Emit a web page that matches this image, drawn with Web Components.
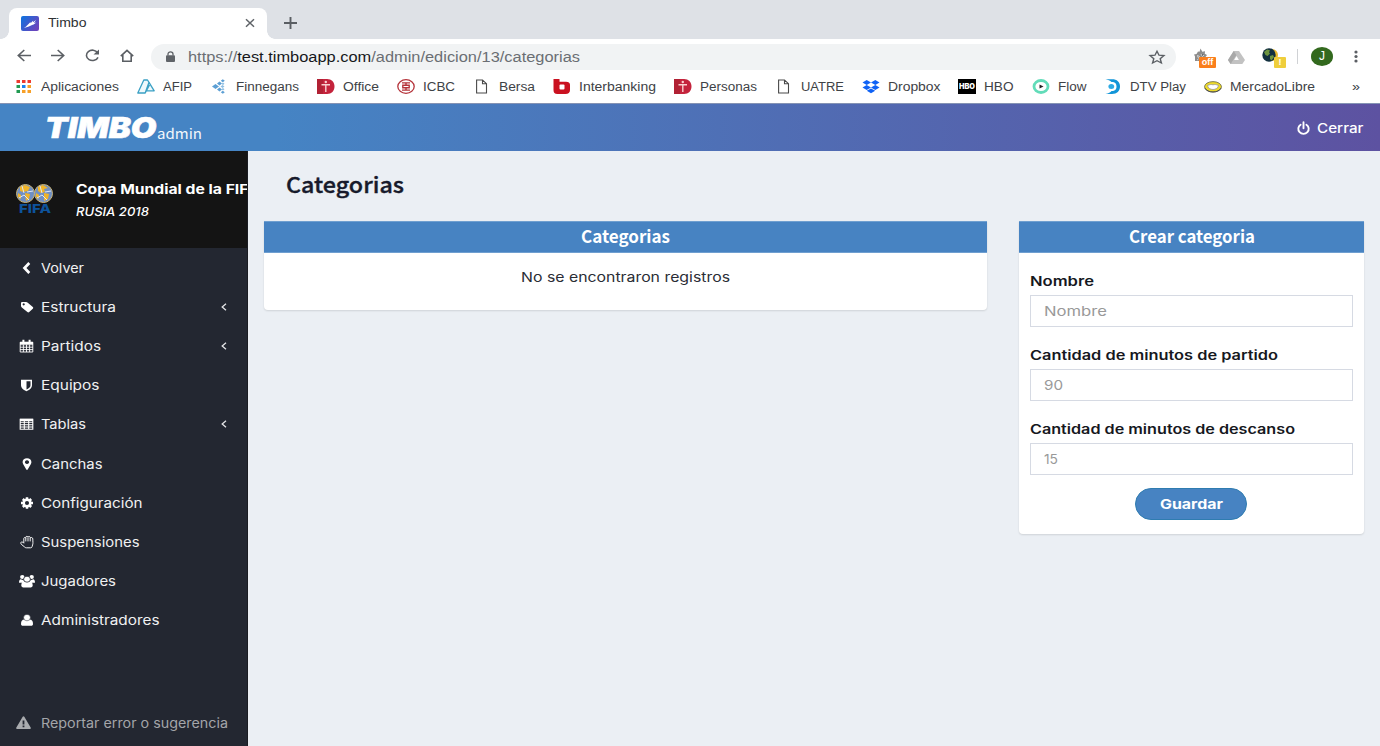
<!DOCTYPE html>
<html lang="es">
<head>
<meta charset="utf-8">
<title>Timbo</title>
<style>
html,body{margin:0;padding:0;height:100%;overflow:hidden;background:#ebeff4}
</style>
</head>
<body>
<timbo-window></timbo-window>

<script>
const define = (name, html, after) => {
  const tpl = document.createElement('template');
  tpl.innerHTML = html;
  customElements.define(name, class extends HTMLElement {
    connectedCallback() {
      if (this.shadowRoot) return;
      this.attachShadow({mode: 'open'}).append(tpl.content.cloneNode(true));
      if (after) after(this, this.shadowRoot);
    }
  });
};

/* One line of text, set to an exact width by widening its letters. */
define('fit-text', `
<style>
:host{display:inline-block;white-space:nowrap;flex:none}
span{display:inline-block;transform-origin:0 50%;white-space:pre}
</style><span><slot></slot></span>`, (el, root) => {
  const w = parseFloat(el.getAttribute('w'));
  const s = root.querySelector('span');
  const n = s.getBoundingClientRect().width;
  el.style.width = w + 'px';
  if (n) s.style.transform = 'scaleX(' + (w / n) + ')';
});

const ICONS = {
  /* browser */
  favicon: '<defs><linearGradient id="g" x1="0" x2="1" y2=".6"><stop stop-color="#0b74e0"/><stop offset="1" stop-color="#6a45bd"/></linearGradient></defs><rect width="18" height="15" rx="2" fill="url(#g)"/><path d="M2.800 11.800c1.700-.4 2.500-1.600 4-3l2.700-2.900.1 1.300 2.600-2.700-.3 1.800L15 3.900l-2 3 2.300-.5c-1.700 1.700-3.600 2.300-5.800 3.300-2.200.9-4.200 1.900-6.700 2.100z" fill="#fff"/>|18 15',
  close: '<path d="M1 1.200l8 7.600M9 1.200L1 8.800" stroke="#5f6368" stroke-width="1.500"/>|10 10',
  plus: '<path d="M6.500 0v12M0 6h13" stroke="#5a5e63" stroke-width="1.900"/>|13 12',
  back: '<path d="M14 6.500H1.500M7.300 1L1.300 6.500l6 5.500" fill="none" stroke="#5b5f64" stroke-width="1.600"/>|14 13',
  fwd: '<path d="M0 6.500h12.500M6.700 1l6 5.500-6 5.500" fill="none" stroke="#5b5f64" stroke-width="1.600"/>|14 13',
  reload: '<path d="M12.600 3.700A6 5.200 0 1 0 13 8.300" fill="none" stroke="#5b5f64" stroke-width="1.600"/><path d="M14 .5v5H8.500z" fill="#5b5f64"/>|15 13',
  home: '<path d="M.8 7.200L7 1.300l6.200 5.900M2.800 6v6.200h8.400V6" fill="none" stroke="#5b5f64" stroke-width="1.600"/>|14 13',
  lock: '<rect y="4.200" width="9" height="6.800" rx="1" fill="#5f6368"/><path d="M2 4.500V3a2.500 2.200 0 0 1 5 0v1.500" fill="none" stroke="#5f6368" stroke-width="1.300"/>|9 11',
  star: '<path d="M8 1.200l2 4 4.900.4-3.700 3.100 1.200 4.300L8 10.700 3.600 13l1.200-4.300L1.100 5.600 6 5.200z" fill="none" stroke="#5b5f64" stroke-width="1.400"/>|16 14',
  dots: '<circle cx="2" cy="2" r="1.600"/><circle cx="2" cy="6.500" r="1.600"/><circle cx="2" cy="11" r="1.600"/>|4 13',
  wolf: '<path d="M1 13V8.500L0 6.500l2.500-.5L4 3.500l1.500.3L6.500.5 8.300 3.700l2.700-.5-.2 2.500L13 7l-1.500 2 .5 4z" fill="#8d8d8d"/><path d="M3.500 7.500l2 1-1.500 1zM7 6l1.500 2.500L10 7M3 12l2.500-1.500L8 12" stroke="#ececec" fill="#444" stroke-width=".8"/>|14 14',
  drive: '<path d="M5.700 0h5.300l6 9-2.700 4H2.600L0 9z" fill="#c2c2c2"/><path d="M5.700 0L0 9l2.600 4L8.400 4z" fill="#a9a9a9"/><path d="M8.500 5l2.400 4H6.100z" fill="#fff"/>|17 13',
  globe: '<circle cx="10" cy="7" r="6" fill="#e9b92e"/><circle cx="7" cy="7" r="6.700" fill="#12303f"/><path d="M2 4l3-2.500 3 .8-1 2 1 1.200-2.500 2.500-2-1zM8 8l3-1 1 2-2.500 3.500L8 11z" fill="#6d9440"/>|17 14',
  /* bookmarks */
  apps: '<g><path fill="#ee3b2f" d="M1.500 1h3.500v3H1.500zM7 1h3.500v3H7zM12.500 1H16v3h-3.500z"/><path fill="#219a52" d="M1.500 6h3.500v3H1.500zM1.500 11h3.500v3H1.500z"/><path fill="#1a82f0" d="M7 6h3.500v3H7z"/><path fill="#f7a028" d="M12.500 6H16v3h-3.500zM7 11h3.500v3H7zM12.500 11H16v3h-3.500z"/></g>|18 15',
  afip: '<path d="M6.800 1h3.700L12 3.300 8.200 14H.8zM12 3.300l5.200 8.500H9M8.200 14L12.500 6" fill="#eef9fc" stroke="#3aa0c4" stroke-width="1.300" stroke-linejoin="round"/>|18 15',
  finn: '<g fill="#5c9fd4"><path d="M2 7.500l3.500-2.600L9 7.500l-3.500 2.600z"/><path d="M7 4.600l2.500-2 2.500 2-2.500 2zM7 10.400l2.500-2 2.500 2-2.500 2zM10.800 1.700l2-1.500 2 1.500-2 1.500zM10.800 13.300l2-1.500 2 1.500-2 1.500z"/></g><g fill="#8fbfe3"><path d="M10.500 7.500l2-1.600 2 1.600-2 1.600zM11.500 4.700l1.500-1.200 1.500 1.200L13 5.900zM11.500 10.300l1.500-1.200 1.500 1.200-1.500 1.200z"/></g>|18 15',
  telecom: '<path d="M0 0h10c4.500 0 7.500 3 7.500 7.500S14.500 15 10 15H0z" fill="#c4233c"/><path d="M0 0h6v15H0z" fill="#a5202f" opacity=".6"/><path d="M4.500 5.700h8.500M8.800 5v8" stroke="#f9cfcf" stroke-width="1.400"/><circle cx="8.800" cy="3" r="1.200" fill="#f9cfcf"/>|18 15',
  icbc: '<ellipse cx="9" cy="7.500" rx="8.200" ry="6.800" fill="#fff" stroke="#b5343b" stroke-width="1.300"/><path d="M5 3.900h8M5 11.100h8M5.800 6.200h6.400v2.600H5.800zM9 3.900v2.300M9 8.800v2.300" fill="none" stroke="#b5343b" stroke-width="1.400"/>|18 15',
  page: '<path d="M3.600 1h5.900l4 3.700V14H3.600zM9.500 1v3.700h4" fill="#fff" stroke="#4a4a4a" stroke-width="1.100"/>|18 15',
  inter: '<path d="M.5 0h6v2.700H13c2.500 0 4 1 4 3V11c0 2.600-1.600 4-4.500 4h-8C1.600 15 .5 13.500.5 11z" fill="#ca1120"/><rect x="6.500" y="5.500" width="5" height="5" rx="1" fill="#fff"/>|18 15',
  dropbox: '<path d="M4.700 1L9 3.500 4.700 6 .5 3.500zM13.300 1l4.200 2.500L13.300 6 9 3.500zM4.700 6L9 8.500 4.700 11 .5 8.500zM13.300 6l4.200 2.500-4.200 2.500L9 8.500zM9 9.400l4.200 2.400L9 14.200l-4.200-2.400z" fill="#0f62f5"/>|18 15',
  flow: '<ellipse cx="9" cy="7.500" rx="7" ry="6" fill="#fff" stroke="#62dcb9" stroke-width="2.800"/><path d="M7.500 5.400l4 2.100-4 2.100z" fill="#222"/>|18 15',
  dtv: '<path d="M1.500.3h6.500C13 .3 16 3 16 7.500S13 15 8 15H1.500c3-.6 5-1.400 6-3 4 0 5-2 5-4.500s-1-4.500-5-4.500C6 1.500 4 .8 1.500.3z" fill="#1295d8"/><ellipse cx="7.300" cy="7.500" rx="2.900" ry="2.500" fill="#2eaae4"/>|18 15',
  meli: '<ellipse cx="9" cy="7.800" rx="8.500" ry="5.200" fill="#ecd92c" stroke="#55543f" stroke-width=".7"/><path d="M3.500 6.500C6 5.500 7 5.300 9 5.800c2-.5 3-.3 5.500.7-.3 2.500-3 4-5.500 4s-5.200-1.500-5.500-4z" fill="#fff" stroke="#8b8b8b" stroke-width=".7"/><path d="M1 9.200c1.500 2.500 4.500 3.800 8 3.800s6.500-1.300 8-3.800" fill="none" stroke="#4a4b52" stroke-width="1"/>|18 15',
  /* application */
  power: '<path d="M3.600 2.700a5.200 5 0 1 0 5.800 0M6.500.3v5.900" fill="none" stroke="#fff" stroke-width="1.900" stroke-linecap="round"/>|13 13',
  left: '<path d="M8.800 2L4 7l4.800 5" fill="none" stroke="#fff" stroke-width="2.700" transform="translate(.5 0)"/>|14 14',
  tag: '<path fill-rule="evenodd" d="M1 3.200C1 2.500 1.600 2 2.300 2H6c.6 0 1.300.3 1.800.7l5 4.400c.6.5.6 1.200 0 1.700l-3.600 3.300c-.5.5-1.300.5-1.800 0L1.800 7.600C1.300 7.100 1 6.600 1 6zM3.700 3.300a1.100 1 0 1 0 .01 0z"/>|14 14',
  cal: '<path d="M1.200 3.200h12.600V13H1.200zM1 5.700h13M1 8.200h13M1 10.600h13M4.400 5.500V13M7.500 5.500V13M10.600 5.500V13" fill="none" stroke="#fff" stroke-width=".9"/><path d="M1 3h13v2H1zM3.400.8h2v3h-2zM9.600.8h2v3h-2z"/>|15 14',
  shield: '<path fill-rule="evenodd" d="M2 1.800h11v5.500c0 3-3 5-5.500 6C5 12.300 2 10.300 2 7.300zM7.500 3.200v8.400c2-1 4-2.300 4-4.400v-4z"/>|15 14',
  table: '<path d="M1.200 2.200h12.600v10H1.200zM1 5.300h13M1 7.700h13M1 10h13M5.300 4v8M9.700 4v8" fill="none" stroke="#fff" stroke-width="1.100"/><path d="M1 1.800h13v2.200H1z"/>|15 14',
  pin: '<path fill-rule="evenodd" d="M7 1.200c2.600 0 4.400 1.600 4.400 3.900 0 .8-.2 1.300-.5 1.800L7.700 12.600c-.3.500-1.100.5-1.400 0L3.100 6.900c-.3-.5-.5-1-.5-1.800 0-2.300 1.800-3.900 4.400-3.900zM7 3.200a2.100 1.900 0 1 0 .01 0z"/>|14 14',
  gear: '<path d="M7 1.200v11.600M1 7h12M2.800 3l8.400 8M11.200 3l-8.400 8" stroke="#fff" stroke-width="2.500"/><ellipse cx="7" cy="7" rx="3.300" ry="3.200" fill="#232731" stroke="#fff" stroke-width="2.500"/>|14 14',
  hand: '<path d="M3.800 8.200V3.500c0-1.300 2-1.300 2-.1V2.300c0-1.300 2.200-1.300 2.200 0 0-1.200 2.200-1.200 2.200.2v.8c0-1.200 2.600-1.200 2.600.6 0 3 .4 4.300-.2 6l-.5 1.700c-.2.800-.6 1.200-1.500 1.200H6.500c-1 0-1.500-.3-2-.9L1.300 9.300C0 7.600 1.500 6.200 2.800 7.200l1 1M5.800 3.400v3M8 2.700v3.700M10.200 3.300v3.100" fill="none" stroke="#fff" stroke-width=".95" stroke-linejoin="round"/>|14 14',
  users: '<ellipse cx="3.300" cy="3" rx="2.200" ry="2"/><ellipse cx="12.700" cy="3" rx="2.200" ry="2"/><path d="M0 8.700c0-2 .7-3.300 1.700-3.400L5 6.500v2.200zM16 8.700c0-2-.7-3.300-1.700-3.400L11 6.500v2.200z"/><path d="M2.300 11.500c0-2.500 1-4.200 2.800-4.200h5.800c1.800 0 2.800 1.700 2.800 4.200 0 1.100-.8 1.900-2 1.900H4.300c-1.200 0-2-.8-2-1.900z"/><ellipse cx="8" cy="5.200" rx="3.400" ry="3" stroke="#232731" stroke-width=".8"/>|16 14',
  user: '<path d="M1 11c0-2.700 1.100-4.400 3.300-4.400h5.400c2.200 0 3.300 1.700 3.300 4.400 0 1.100-.8 1.800-1.800 1.800H2.800C1.800 12.800 1 12.100 1 11z"/><ellipse cx="7" cy="4.600" rx="3.400" ry="3.200" stroke="#232731" stroke-width=".5"/>|14 14',
  angle: '<path d="M5 .8L1.200 4 5 7.200" fill="none" stroke="#e4e5e7" stroke-width="1.300"/>|6 8',
  warn: '<path fill-rule="evenodd" d="M6.700.8c.4-.7 1.200-.7 1.600 0l6.500 11c.3.600-.1 1.200-.8 1.200H1c-.7 0-1.100-.6-.8-1.200zM6.600 4.400v4h1.800v-4zM6.600 9.500v1.800h1.800V9.500z" fill="#a9abae"/>|15 13',
  fifa: '<circle cx="9.500" cy="9.500" r="9" fill="#6f8fc4" stroke="#c9b478"/><circle cx="27.500" cy="9.500" r="9" fill="#6f8fc4" stroke="#c9b478"/><g fill="#f0b429"><path d="M4 3l5-2 5 2-2 4-5 1-3-1zM9 9l5 1-1 5-3 2zM2 9l3 2v4l-3-2zM22 3l5-2 5 3-4 1 1 3-4 1-3-2zM28 9l5 1-1 5-4 2z"/><path d="M20 9l3 2v4l-3-2z"/></g><path d="M3 14l5-3 5 5M6 2l2 7M21 14l5-3 5 5M24 2l2 7M11 8l6-1M29 8l6-1" stroke="#dfe8f4" fill="none"/>|37 19'
};

define('ui-icon', `<style>:host{display:inline-flex;flex:none}svg{display:block;overflow:visible}</style>`, (el, root) => {
  const [body, size] = ICONS[el.getAttribute('name')].split('|');
  const [w, h] = size.split(' ');
  root.innerHTML += `<svg width="${w}" height="${h}" viewBox="0 0 ${w} ${h}" fill="${el.getAttribute('fill') || '#fff'}">${body}</svg>`;
});

define('tab-strip', `
<style>
:host{display:flex;height:39px;background:#dee1e6;box-sizing:border-box;padding:8px 0 0 9px;align-items:flex-start;font:12px/14px "Liberation Sans",Arial,sans-serif;color:#2e3134}
.tab{position:relative;display:flex;align-items:center;width:258px;height:31px;box-sizing:border-box;padding:0 12px 1px;background:#fff;border-radius:8px 8px 0 0}
.tab::before,.tab::after{content:"";position:absolute;bottom:0;width:8px;height:8px}
.tab::before{left:-8px;background:radial-gradient(circle at 0 0,transparent 7.500px,#fff 8px)}
.tab::after{right:-8px;background:radial-gradient(circle at 100% 0,transparent 7.500px,#fff 8px)}
fit-text{margin-left:8.500px}
ui-icon + fit-text + ui-icon{margin-left:auto}
.new{margin:9px 0 0 17px}
</style>
<div class="tab"><ui-icon name="favicon"></ui-icon><fit-text w="38.500">Timbo</fit-text><ui-icon name="close"></ui-icon></div>
<ui-icon class="new" name="plus"></ui-icon>`);

define('badge-icon', `
<style>
:host{display:block;position:relative;flex:none}
b{position:absolute;left:var(--x);top:var(--y);width:var(--w);height:11px;background:var(--c);border-radius:1px;color:#fff;font:bold 9px/11px "Liberation Sans",Arial,sans-serif;text-align:center}
</style><slot></slot><b><slot name="badge"></slot></b>`);

define('tool-bar', `
<style>
:host{display:flex;align-items:center;height:34px;background:#fff;box-sizing:border-box;padding:0 22px 0 17px;font:14px/20px "Liberation Sans",Arial,sans-serif}
.nav{display:flex;align-items:center;gap:20px;margin-right:17px;padding-bottom:1px}
.omni{display:flex;align-items:center;box-sizing:border-box;width:1025px;height:26px;border-radius:13px;background:#f1f3f4;padding:0 11px 0 15px;color:#6a6e73;margin-top:1px}
.omni fit-text{margin-left:12.500px}
.omni b{font-weight:400;color:#16181b}
.omni ui-icon:last-child{margin-left:auto}
.ext{display:flex;align-items:center;margin-left:18px;flex:1}
.sep{width:1px;height:15px;background:#d0d2d5;margin-left:18px}
.av{display:flex;justify-content:center;width:22px;height:19px;border-radius:50%;background:#33691e;color:#fff;font-size:12px;line-height:19px;margin-left:13px}
</style>
<div class="nav"><ui-icon name="back"></ui-icon><ui-icon name="fwd"></ui-icon><ui-icon name="reload"></ui-icon><ui-icon name="home"></ui-icon></div>
<div class="omni"><ui-icon name="lock"></ui-icon><fit-text w="392">https://<b>test.timboapp.com</b>/admin/edicion/13/categorias</fit-text><ui-icon name="star"></ui-icon></div>
<div class="ext">
<badge-icon style="--x:5px;--y:10px;--w:17px;--c:#fa7f1c;margin-top:2px"><ui-icon name="wolf"></ui-icon><span slot="badge">off</span></badge-icon>
<ui-icon name="drive" style="margin-left:20px;margin-top:2px"></ui-icon>
<badge-icon style="margin-left:17px;--x:12px;--y:10px;--w:12px;--c:#efce3c;margin-top:1px"><ui-icon name="globe"></ui-icon><span slot="badge">!</span></badge-icon>
<span class="sep"></span><span class="av">J</span><ui-icon name="dots" fill="#5b5f64" style="margin-left:auto"></ui-icon></div>`);

const BOOKMARKS = [['apps','Aplicaciones',78],['afip','AFIP',29],['finn','Finnegans',63],['telecom','Office',36],['icbc','ICBC',32],['page','Bersa',36],['inter','Interbanking',77],['telecom','Personas',57],['page','UATRE',43],['dropbox','Dropbox',52.500],['hbo','HBO',29.500],['flow','Flow',28.500],['dtv','DTV Play',56],['meli','MercadoLibre',85]];

define('hbo-mark', `
<style>:host{display:flex;width:18px;height:15px;background:#000;align-items:center;justify-content:center;color:#fff;font:900 7px/15px Inter,sans-serif}</style><fit-text w="16">HBO</fit-text>`);

define('bookmark-bar', `
<style>
:host{display:flex;align-items:center;height:31px;background:#fff;border-bottom:1px solid #8593b4;box-sizing:border-box;padding:0 20px 3px 14.500px;gap:18px;font:12px/16px "Liberation Sans",Arial,sans-serif;color:#3e4246}
.i{display:flex;align-items:center;gap:8px;flex:none}
.more{margin-left:auto}
</style>`, (el, root) => {
  root.innerHTML += BOOKMARKS.map(([i, t, w]) =>
    `<div class="i">${i === 'hbo' ? '<hbo-mark></hbo-mark>' : `<ui-icon name="${i}"></ui-icon>`}<fit-text w="${w}">${t}</fit-text></div>`).join('')
    + '<fit-text class="more" w="8">»</fit-text>';
});

define('app-header', `
<style>
:host{display:flex;align-items:center;height:47px;box-sizing:border-box;padding:0 17px 0 44.500px;background:linear-gradient(90deg,#4584c4 0%,#4584c4 20%,#5d52a1 100%);color:#fff}
.logo{font:italic 900 28px/30px Inter,sans-serif;-webkit-text-stroke:.6px #fff;margin-top:1px}
.admin{font:14px/20px "Noto Sans CJK SC","Noto Sans",sans-serif;margin:11px 0 0 1px;color:#f3f7fb}
.out{display:flex;align-items:center;gap:7px;margin:1px 0 0 auto;font:500 13px/20px Inter,sans-serif}
</style>
<fit-text class="logo" w="111.500">TIMBO</fit-text><fit-text class="admin" w="45">admin</fit-text>
<div class="out"><ui-icon name="power"></ui-icon><fit-text w="46.500">Cerrar</fit-text></div>`);

define('side-item', `
<style>
:host{display:flex;align-items:center;height:39.200px;box-sizing:border-box;padding:0 20px 0 16.500px;font:400 13px/18px Inter,sans-serif;color:#f0f1f2}
.ic{width:20px;margin-right:4.500px;display:flex;justify-content:center}
.sub{margin-left:auto}
</style>`, (el, root) => {
  root.innerHTML += `<span class="ic"><ui-icon name="${el.getAttribute('icon')}"></ui-icon></span><fit-text w="${el.getAttribute('w')}">${el.textContent}</fit-text>`
    + (el.hasAttribute('sub') ? '<ui-icon class="sub" name="angle"></ui-icon>' : '');
});

define('side-bar', `
<style>
:host{display:flex;flex-direction:column;width:248px;flex:none;background:#232731;box-sizing:border-box;border-right:1px solid #1a1c22;overflow:hidden}
.cup{display:flex;height:97px;background:#141414;box-sizing:border-box;padding-left:16px;margin-right:-1px;color:#fff;font-family:Inter,sans-serif}
.fifa{display:flex;flex-direction:column;align-items:center;width:37px;padding-top:33px;margin-right:22.500px;flex:none;color:#0d539b;font:800 12px/11px Inter,sans-serif}
.fifa fit-text{margin-top:0}
.t{display:flex;flex-direction:column;padding-top:28px;white-space:nowrap}
.t1{font:700 13px/20px Inter,sans-serif}
.t2{font:italic 500 12px/18px Inter,sans-serif;margin-top:4px}
.foot{display:flex;align-items:center;margin-top:auto;height:47px;padding-left:16px;gap:10px;color:#a3a5a9;font:400 13px/18px Inter,sans-serif}
</style>
<div class="cup"><div class="fifa"><ui-icon name="fifa"></ui-icon><fit-text w="32">FIFA</fit-text></div>
<div class="t"><fit-text class="t1" w="172.500">Copa Mundial de la FIF</fit-text><fit-text class="t2" w="73">RUSIA 2018</fit-text></div></div>
<side-item icon="left" w="43">Volver</side-item>
<side-item icon="tag" w="75" sub>Estructura</side-item>
<side-item icon="cal" w="60" sub>Partidos</side-item>
<side-item icon="shield" w="58.500">Equipos</side-item>
<side-item icon="table" w="45" sub>Tablas</side-item>
<side-item icon="pin" w="61.500">Canchas</side-item>
<side-item icon="gear" w="101.500">Configuración</side-item>
<side-item icon="hand" w="98.500">Suspensiones</side-item>
<side-item icon="users" w="75">Jugadores</side-item>
<side-item icon="user" w="118.500">Administradores</side-item>
<div class="foot"><ui-icon name="warn"></ui-icon><fit-text w="187">Reportar error o sugerencia</fit-text></div>`);

define('ui-panel', `
<style>
:host{display:block;background:#fff;border-radius:0 0 4px 4px;box-shadow:0 1px 2px rgba(0,0,0,.12)}
.h{display:flex;justify-content:center;height:32px;box-sizing:border-box;background:#4783c2;border:solid #6f9fd0;border-width:1px 0;color:#fff;font:700 17.500px/27px "Noto Sans CJK SC","Noto Sans",sans-serif}
</style><div class="h"><slot name="title"></slot></div><slot></slot>`);

define('form-field', `
<style>
:host{display:block;margin-bottom:18px}
.l{display:block;font:600 13px/20px Inter,sans-serif;color:#16181e;height:24px}
.in{display:flex;align-items:center;height:32px;box-sizing:border-box;border:1px solid #d6dae3;padding-left:13px;color:#999;font:400 13px/20px Inter,sans-serif;background:#fff}
</style>`, (el, root) => {
  const a = n => el.getAttribute(n);
  root.innerHTML += `<div class="l"><fit-text w="${a('lw')}">${a('label')}</fit-text></div><div class="in"><fit-text w="${a('vw')}">${a('value')}</fit-text></div>`;
});

define('category-page', `
<style>
:host{display:block;flex:1;background:#ebeff4;padding:0 16px}
h1{margin:0;padding:0 0 0 22px;height:70px;font:500 21.500px/66px "Noto Sans CJK SC","Noto Sans",sans-serif;color:#171a2b;-webkit-text-stroke:.35px #171a2b}
.row{display:grid;grid-template-columns:723px 345px;gap:32px;align-items:start}
.empty{display:flex;justify-content:center;height:56.500px;box-sizing:border-box;padding-top:14px;font:400 13px/20px Inter,sans-serif;color:#2a2d35}
.form{padding:18px 11px 14px 11px}
form-field:last-of-type{margin-bottom:13px}
.btn{display:flex;align-items:center;justify-content:center;width:112px;height:32px;box-sizing:border-box;margin:0 auto;border:1px solid #2f7cb0;border-radius:16px;background:#4783c2;color:#fff;font:700 13px/20px Inter,sans-serif;position:relative;left:-.5px}
</style>
<h1><fit-text w="118">Categorias</fit-text></h1>
<div class="row">
<ui-panel><fit-text slot="title" w="89">Categorias</fit-text><div class="empty"><fit-text w="209">No se encontraron registros</fit-text></div></ui-panel>
<ui-panel><fit-text slot="title" w="126">Crear categoria</fit-text><div class="form">
<form-field label="Nombre" lw="64" value="Nombre" vw="63"></form-field>
<form-field label="Cantidad de minutos de partido" lw="248" value="90" vw="19"></form-field>
<form-field label="Cantidad de minutos de descanso" lw="265" value="15" vw="14"></form-field>
<div class="btn"><fit-text w="63">Guardar</fit-text></div></div></ui-panel>
</div>`);

define('timbo-window', `
<style>:host{display:flex;flex-direction:column;width:1380px;height:746px;overflow:hidden}.body{display:flex;flex:1;min-height:0}</style>
<tab-strip></tab-strip><tool-bar></tool-bar><bookmark-bar></bookmark-bar><app-header></app-header>
<div class="body"><side-bar></side-bar><category-page></category-page></div>`);
</script>
</body>
</html>
